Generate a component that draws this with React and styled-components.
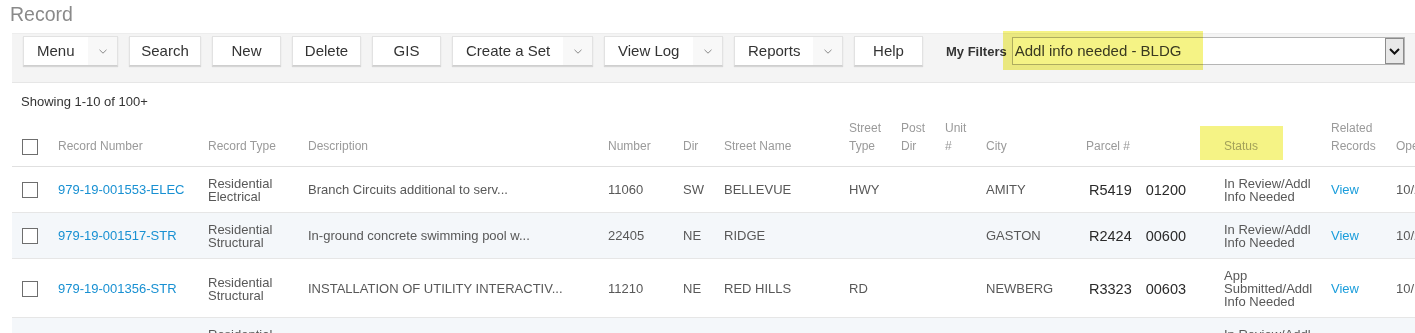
import React from "react";
import styled, { createGlobalStyle } from "styled-components";

const GlobalStyle = createGlobalStyle`
	body {
		margin: 0;
		background: #fff;
		font-family: "Liberation Sans", Arial, sans-serif;
		overflow: hidden;
	}
`;

const toolbarButtons = [
	{ label: "Menu", drop: true, width: 95 },
	{ label: "Search", width: 72 },
	{ label: "New", width: 69 },
	{ label: "Delete", width: 69 },
	{ label: "GIS", width: 69 },
	{ label: "Create a Set", drop: true, width: 141 },
	{ label: "View Log", drop: true, width: 119 },
	{ label: "Reports", drop: true, width: 109 },
	{ label: "Help", width: 69 },
];

const columns = [
	{ key: "check", width: 46 },
	{ key: "number", label: ["Record Number"], width: 150 },
	{ key: "type", label: ["Record Type"], width: 100 },
	{ key: "desc", label: ["Description"], width: 300 },
	{ key: "num", label: ["Number"], width: 75 },
	{ key: "dir", label: ["Dir"], width: 41 },
	{ key: "street", label: ["Street Name"], width: 125 },
	{ key: "stype", label: ["Street", "Type"], width: 52 },
	{ key: "post", label: ["Post", "Dir"], width: 44 },
	{ key: "unit", label: ["Unit", "#"], width: 41 },
	{ key: "city", label: ["City"], width: 100 },
	{ key: "parcel", label: ["Parcel #"], width: 138 },
	{ key: "status", label: ["Status"], width: 107, highlight: true },
	{ key: "related", label: ["Related", "Records"], width: 65 },
	{ key: "opened", label: ["Opened Date"], width: 100 },
];

const records = [
	{
		number: "979-19-001553-ELEC",
		type: ["Residential", "Electrical"],
		desc: "Branch Circuits additional to serv...",
		num: "11060",
		dir: "SW",
		street: "BELLEVUE",
		stype: "HWY",
		city: "AMITY",
		parcel: ["R5419", "01200"],
		status: "In Review/Addl Info Needed",
		opened: "10/23/2019",
	},
	{
		number: "979-19-001517-STR",
		type: ["Residential", "Structural"],
		desc: "In-ground concrete swimming pool w...",
		num: "22405",
		dir: "NE",
		street: "RIDGE",
		stype: "",
		city: "GASTON",
		parcel: ["R2424", "00600"],
		status: "In Review/Addl Info Needed",
		opened: "10/21/2019",
	},
	{
		number: "979-19-001356-STR",
		type: ["Residential", "Structural"],
		desc: "INSTALLATION OF UTILITY INTERACTIV...",
		num: "11210",
		dir: "NE",
		street: "RED HILLS",
		stype: "RD",
		city: "NEWBERG",
		parcel: ["R3323", "00603"],
		status: "App Submitted/Addl Info Needed",
		opened: "10/15/2019",
	},
	{
		number: "979-19-001298-STR",
		type: ["Residential", "Structural"],
		desc: "New single family dwelling with att...",
		num: "17850",
		dir: "NW",
		street: "CHEHALEM",
		stype: "DR",
		city: "NEWBERG",
		parcel: ["R3218", "01400"],
		status: "In Review/Addl Info Needed",
		opened: "10/14/2019",
	},
];

const Caret = () => (
	<svg width="8" height="5" viewBox="0 0 8 5">
		<polyline points="0.5,0.8 4,4.2 7.5,0.8" fill="none" stroke="#8a8a8a" strokeWidth="1" />
	</svg>
);

const SelectCaret = () => (
	<svg width="11" height="7" viewBox="0 0 11 7">
		<polyline points="1,1 5.5,5.5 10,1" fill="none" stroke="#111" strokeWidth="2" />
	</svg>
);

const App = () => {
	return (
		<>
			<GlobalStyle />
			<Page>
				<Title>Record</Title>
				<Toolbar>
					{toolbarButtons.map((b) =>
						b.drop ? (
							<DropButton key={b.label} $width={b.width}>
								<DropLabel>{b.label}</DropLabel>
								<CaretBox>
									<Caret />
								</CaretBox>
							</DropButton>
						) : (
							<ToolButton key={b.label} $width={b.width}>
								{b.label}
							</ToolButton>
						)
					)}
					<FilterGroup>
						<FilterLabel>My Filters</FilterLabel>
						<FakeSelect>
							<SelectText>Addl info needed - BLDG</SelectText>
							<SelectArrow>
								<SelectCaret />
							</SelectArrow>
						</FakeSelect>
						<Marker />
					</FilterGroup>
				</Toolbar>
				<Showing>Showing 1-10 of 100+</Showing>
				<TableWrap>
					<Table>
						<colgroup>
							{columns.map((c) => (
								<col key={c.key} style={{ width: c.width }} />
							))}
						</colgroup>
						<thead>
							<tr>
								{columns.map((c) => (
									<Th key={c.key} $check={c.key === "check"}>
										{c.key === "check" ? (
											<Checkbox />
										) : c.highlight ? (
											<HeaderMark>{c.label[0]}</HeaderMark>
										) : (
											c.label.map((line, i) => (
												<React.Fragment key={i}>
													{i > 0 && <br />}
													{line}
												</React.Fragment>
											))
										)}
									</Th>
								))}
							</tr>
						</thead>
						<tbody>
							{records.map((r, i) => (
								<Row key={r.number} $alt={i % 2 === 1}>
									<Td $check>
										<Checkbox />
									</Td>
									<Td>
										<RecordLink>{r.number}</RecordLink>
									</Td>
									<Td $tight>
										{r.type[0]}
										<br />
										{r.type[1]}
									</Td>
									<Td>{r.desc}</Td>
									<Td>{r.num}</Td>
									<Td>{r.dir}</Td>
									<Td>{r.street}</Td>
									<Td>{r.stype}</Td>
									<Td />
									<Td />
									<Td>{r.city}</Td>
									<Td $parcel>
										{r.parcel[0]}
										<ParcelPart>{r.parcel[1]}</ParcelPart>
									</Td>
									<Td $tight $padRight={12}>
										{r.status}
									</Td>
									<Td>
										<ViewLink>View</ViewLink>
									</Td>
									<Td>{r.opened}</Td>
								</Row>
							))}
						</tbody>
					</Table>
				</TableWrap>
			</Page>
		</>
	);
};

export default App;

const Page = styled.div`
	width: 1415px;
	height: 333px;
	overflow: hidden;
`;

const Title = styled.h1`
	margin: 0 0 7px 0;
	padding: 2px 0 0 10px;
	height: 24px;
	font-size: 19.5px;
	line-height: 24px;
	font-weight: normal;
	color: #8a8a8a;
`;

const Toolbar = styled.div`
	margin-left: 12px;
	padding: 2px 0 0 11px;
	box-sizing: border-box;
	height: 50px;
	display: flex;
	align-items: flex-start;
	gap: 11px;
	background: #f4f4f4;
	border-top: 1px solid #ededed;
	border-bottom: 1px solid #e6e6e6;
`;

const buttonBase = `
	flex: none;
	height: 30px;
	box-sizing: border-box;
	background: #fff;
	border: 1px solid #e2e2e2;
	border-bottom-color: #cfcfcf;
	box-shadow: 0 1px 1px rgba(0, 0, 0, 0.12);
	font-family: "Liberation Sans", Arial, sans-serif;
	font-size: 15px;
	line-height: 28px;
	color: #333;
	cursor: pointer;
`;

const ToolButton = styled.button`
	${buttonBase}
	width: ${(p) => p.$width}px;
	padding: 0;
	text-align: center;
`;

const DropButton = styled.button`
	${buttonBase}
	width: ${(p) => p.$width}px;
	display: flex;
	align-items: stretch;
	padding: 0 0 0 13px;
`;

const DropLabel = styled.span`
	flex: 1;
	text-align: left;
	white-space: nowrap;
`;

const CaretBox = styled.span`
	width: 29px;
	display: flex;
	align-items: center;
	justify-content: center;
	background: #f8f8f8;
`;

const FilterGroup = styled.div`
	position: relative;
	height: 30px;
	display: flex;
	align-items: center;
	margin-left: 12px;
`;

const FilterLabel = styled.span`
	font-size: 13px;
	font-weight: bold;
	color: #333;
	margin-right: 5px;
`;

const FakeSelect = styled.div`
	width: 393px;
	height: 28px;
	box-sizing: border-box;
	display: flex;
	align-items: stretch;
	background: #fff;
	border: 1px solid #b5b5b5;
`;

const SelectText = styled.span`
	flex: 1;
	padding-left: 2px;
	font-size: 15px;
	line-height: 26px;
	color: #3c3c3c;
`;

const SelectArrow = styled.span`
	width: 19px;
	box-sizing: border-box;
	display: flex;
	align-items: center;
	justify-content: center;
	background: #e8e8e8;
	border: 1px solid #8c8c8c;
`;

const Marker = styled.span`
	position: absolute;
	left: 57px;
	top: -5px;
	width: 200px;
	height: 39px;
	background: #f5f385;
	mix-blend-mode: multiply;
	pointer-events: none;
`;

const Showing = styled.div`
	margin: 11px 0 0 21px;
	font-size: 13px;
	line-height: 16px;
	color: #333;
`;

const TableWrap = styled.div`
	margin: 1px 0 0 12px;
	overflow: hidden;
`;

const Table = styled.table`
	width: 1484px;
	table-layout: fixed;
	border-collapse: collapse;
`;

const Th = styled.th`
	padding: 8px 8px 11px ${(p) => (p.$check ? "10px" : "0")};
	text-align: left;
	vertical-align: bottom;
	font-size: 12px;
	line-height: 18px;
	font-weight: normal;
	color: #9a9a9a;
	white-space: nowrap;
	border-bottom: 1px solid #e0e0e0;
`;

const HeaderMark = styled.span`
	display: inline-block;
	margin: -11px 0 -5px -24px;
	padding: 11px 25px 5px 24px;
	background: #f5f385;
	color: #a3a15a;
`;

const Row = styled.tr`
	background: ${(p) => (p.$alt ? "#f4f7fa" : "#fff")};
	border-bottom: 1px solid #e6e6e6;
`;

const Td = styled.td`
	padding: 10px ${(p) => p.$padRight || 8}px 9px ${(p) => (p.$check ? "10px" : p.$parcel ? "3px" : "0")};
	vertical-align: middle;
	font-size: ${(p) => (p.$parcel ? "14.5px" : "13px")};
	line-height: ${(p) => (p.$tight ? "13px" : "16px")};
	color: ${(p) => (p.$parcel ? "#2a2a2a" : "#585858")};
	white-space: ${(p) => (p.$tight ? "normal" : "nowrap")};
	overflow: hidden;
`;

const ParcelPart = styled.span`
	margin-left: 14px;
`;

const Checkbox = styled.span`
	display: block;
	width: 16px;
	height: 16px;
	box-sizing: border-box;
	border: 1px solid #6e6e6e;
	background: #fff;
`;

const RecordLink = styled.a`
	color: #1890d2;
	text-decoration: none;
	cursor: pointer;
`;

const ViewLink = styled.a`
	color: #1a9ddb;
	text-decoration: none;
	cursor: pointer;
`;
